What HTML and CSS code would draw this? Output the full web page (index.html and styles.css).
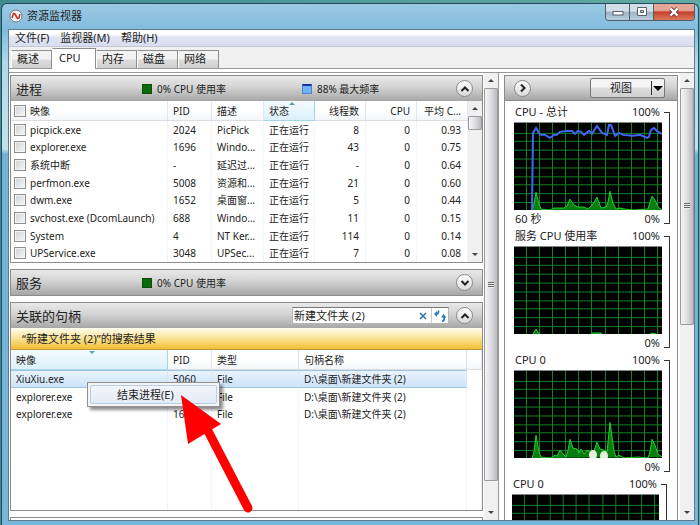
FILE: index.html
```html
<!DOCTYPE html>
<html lang="zh-CN">
<head>
  <meta charset="UTF-8">
  <meta name="viewport" content="width=device-width, initial-scale=1.0">
  <title>资源监视器</title>
  <link rel="stylesheet" href="styles.css">
</head>
<body>

<div class="window">
  <!-- 标题栏 -->
  <header class="titlebar">
    <svg class="app-icon" width="14" height="14" viewBox="0 0 14 14">
      <circle cx="7" cy="7" r="6" fill="#f4f4f4" stroke="#777" stroke-width="1"/>
      <path d="M3 9 L4.5 4.5 L6 5 L8.5 9.5 L10 9 L11 5" fill="none" stroke="#c8382e" stroke-width="1.6"/>
    </svg>
    <h1>资源监视器</h1>
    <div class="win-buttons">
      <button class="win-btn" aria-label="最小化">
        <svg width="12" height="10" viewBox="0 0 12 10"><rect x="1" y="4.5" width="10" height="3.5" fill="#fff" stroke="#56606c"/></svg>
      </button>
      <button class="win-btn" aria-label="最大化">
        <svg width="12" height="10" viewBox="0 0 12 10"><path d="M1.5 .5h9v8h-9z M4.5 3.5h3v2h-3z" fill="#fff" fill-rule="evenodd" stroke="#56606c"/></svg>
      </button>
      <button class="win-btn win-close" aria-label="关闭">
        <svg width="12" height="10" viewBox="0 0 12 10"><path d="M2.5 1.5 L9.5 8.5 M9.5 1.5 L2.5 8.5" stroke="#6b3a38" stroke-width="4"/><path d="M2.5 1.5 L9.5 8.5 M9.5 1.5 L2.5 8.5" stroke="#fff" stroke-width="2.4"/></svg>
      </button>
    </div>
  </header>

  <div class="client">
    <nav class="menubar">
      <button>文件(F)</button>
      <button>监视器(M)</button>
      <button>帮助(H)</button>
    </nav>

    <div class="tabs" role="tablist">
      <button class="tab" role="tab">概述</button>
      <button class="tab active" role="tab" aria-selected="true">CPU</button>
      <button class="tab" role="tab">内存</button>
      <button class="tab" role="tab">磁盘</button>
      <button class="tab" role="tab">网络</button>
    </div>

    <div class="content">
      <main class="panels">
        <!-- 进程 -->
        <section class="panel">
          <div class="panel-head">
            <h2>进程</h2>
            <span class="meter"><i class="swatch green"></i>0% CPU 使用率</span>
            <span class="meter"><i class="swatch blue"></i>88% 最大频率</span>
            <button class="round" aria-label="折叠"><svg width="10" height="8" viewBox="0 0 10 8"><path d="M1.5 6 L5 2.5 L8.5 6"/></svg></button>
          </div>
          <div class="table-wrap">
            <table class="processes">
              <colgroup>
                <col class="c-name"><col class="c-pid"><col class="c-desc"><col class="c-state"><col class="c-num"><col class="c-num"><col>
              </colgroup>
              <thead>
                <tr>
                  <th><label><input type="checkbox">映像</label></th>
                  <th>PID</th><th>描述</th><th class="sorted">状态</th>
                  <th class="num">线程数</th><th class="num">CPU</th><th class="num">平均 C...</th>
                </tr>
              </thead>
              <tbody>
                <tr><td><label><input type="checkbox">picpick.exe</label></td><td>2024</td><td>PicPick</td><td>正在运行</td><td class="num">8</td><td class="num">0</td><td class="num">0.93</td></tr>
                <tr><td><label><input type="checkbox">explorer.exe</label></td><td>1696</td><td>Windo...</td><td>正在运行</td><td class="num">43</td><td class="num">0</td><td class="num">0.75</td></tr>
                <tr><td><label><input type="checkbox">系统中断</label></td><td>-</td><td>延迟过...</td><td>正在运行</td><td class="num">-</td><td class="num">0</td><td class="num">0.64</td></tr>
                <tr><td><label><input type="checkbox">perfmon.exe</label></td><td>5008</td><td>资源和...</td><td>正在运行</td><td class="num">21</td><td class="num">0</td><td class="num">0.60</td></tr>
                <tr><td><label><input type="checkbox">dwm.exe</label></td><td>1652</td><td>桌面窗...</td><td>正在运行</td><td class="num">5</td><td class="num">0</td><td class="num">0.44</td></tr>
                <tr><td><label><input type="checkbox">svchost.exe (DcomLaunch)</label></td><td>688</td><td>Windo...</td><td>正在运行</td><td class="num">11</td><td class="num">0</td><td class="num">0.15</td></tr>
                <tr><td><label><input type="checkbox">System</label></td><td>4</td><td>NT Ker...</td><td>正在运行</td><td class="num">114</td><td class="num">0</td><td class="num">0.14</td></tr>
                <tr><td><label><input type="checkbox">UPService.exe</label></td><td>3048</td><td>UPSec...</td><td>正在运行</td><td class="num">7</td><td class="num">0</td><td class="num">0.08</td></tr>
              </tbody>
            </table>
            <div class="scrollbar">
              <button class="arrow up" aria-label="向上滚动"></button>
              <div class="thumb thumb-short"></div>
              <button class="arrow down" aria-label="向下滚动"></button>
            </div>
          </div>
        </section>

        <!-- 服务 -->
        <section class="panel">
          <div class="panel-head">
            <h2>服务</h2>
            <span class="meter"><i class="swatch green"></i>0% CPU 使用率</span>
            <button class="round" aria-label="展开"><svg width="10" height="8" viewBox="0 0 10 8"><path d="M1.5 2 L5 5.5 L8.5 2"/></svg></button>
          </div>
        </section>

        <!-- 关联的句柄 -->
        <section class="panel panel-fill">
          <div class="panel-head">
            <h2>关联的句柄</h2>
            <div class="search">
              <input type="text" value="新建文件夹 (2)" aria-label="搜索句柄">
              <button aria-label="清除"><svg width="8" height="8" viewBox="0 0 8 8"><path d="M1 1 L7 7 M7 1 L1 7" stroke="#2f6fae" stroke-width="1.5"/></svg></button>
              <button class="refresh" aria-label="刷新">
                <svg width="14" height="12" viewBox="0 0 14 12" fill="none" stroke="#2a7ac4" stroke-width="1.8"><path d="M5.500 .5 Q6 4 3 4"/><path d="M4 1 L1 4 L4 7 Z" fill="#2a7ac4" stroke="none"/><path d="M9 11.500 Q12 10.500 11 7"/><path d="M8 7.500 L10.500 4 L13.500 7.500 Z" fill="#2a7ac4" stroke="none"/></svg>
              </button>
            </div>
            <button class="round" aria-label="折叠"><svg width="10" height="8" viewBox="0 0 10 8"><path d="M1.5 6 L5 2.5 L8.5 6"/></svg></button>
          </div>
          <div class="result-bar">“新建文件夹 (2)”的搜索结果</div>
          <div class="handles-wrap">
            <table class="handles">
              <colgroup><col class="c-name"><col class="c-pid"><col class="c-type"><col><col class="c-rest"></colgroup>
              <thead>
                <tr><th class="sorted">映像</th><th>PID</th><th>类型</th><th>句柄名称</th><th></th></tr>
              </thead>
              <tbody>
                <tr class="selected"><td>XiuXiu.exe</td><td>5060</td><td>File</td><td>D:\桌面\新建文件夹 (2)</td><td></td></tr>
                <tr><td>explorer.exe</td><td>1696</td><td>File</td><td>D:\桌面\新建文件夹 (2)</td><td></td></tr>
                <tr><td>explorer.exe</td><td>1696</td><td>File</td><td>D:\桌面\新建文件夹 (2)</td><td></td></tr>
                <tr class="filler"><td></td><td></td><td></td><td></td><td></td></tr>
              </tbody>
            </table>
            <div class="context-menu"><button>结束进程(E)</button></div>
            <svg class="pointer" width="76" height="122" viewBox="0 0 76 122">
              <path d="M28 36 L68 113" stroke="#f00" stroke-width="9" stroke-linecap="round"/>
              <path d="M1 0 L41 29 L8 49 Z" fill="#f00"/>
            </svg>
          </div>
        </section>
        <div class="next-panel"></div>
      </main>

      <div class="scrollbar">
        <button class="arrow up" aria-label="向上滚动"></button>
        <div class="thumb thumb-main"><i class="grip"></i></div>
        <button class="arrow down" aria-label="向下滚动"></button>
      </div>

      <!-- 图表 -->
      <aside class="charts">
        <div class="chart-bar">
          <button class="round" aria-label="隐藏图表"><svg width="8" height="10" viewBox="0 0 8 10"><path d="M2 1.5 L5.5 5 L2 8.5"/></svg></button>
          <button class="view-btn"><span>视图</span><i></i></button>
        </div>
        <div class="chart-list">
          <figure class="chart">
            <figcaption><span>CPU - 总计</span><span>100%</span></figcaption>
            <svg class="graph" viewBox="0 0 148 88" preserveAspectRatio="none">
              <defs>
                <path id="grid" d="M12.5 0V88M25.5 0V88M38.5 0V88M51.5 0V88M64.5 0V88M77.5 0V88M91.5 0V88M104.5 0V88M117.5 0V88M130.5 0V88M143.5 0V88M0 10.5H148M0 18.5H148M0 27.5H148M0 36.5H148M0 45.5H148M0 54.5H148M0 62.5H148M0 71.5H148M0 80.5H148"/>
              </defs>
              <use href="#grid" class="grid"/>
              <path class="cpu" d="M18 88 L20 82 L22 70 L25 82 L27 87 L36 88 L40 86 L50 86 L53 84 L56 77 L60 83 L64 85 L70 85 L74 87 L79 82 L83 75 L87 86 L92 85 L94 80 L96 69 L99 81 L102 87 L106 86 L110 87 L120 88 L134 87 L136 80 L138 74 L141 78 L144 85 L148 88"/>
              <path class="freq" d="M18 88 L19 10 L22 5 L26 12 L31 12 L36 15 L40 12 L43 12 L46 9 L52 8 L58 8 L61 11 L64 8 L67 9 L70 12 L75 8 L78 11 L83 3 L88 10 L93 12 L95 2 L97 2 L101 13 L105 10 L109 12 L119 13 L126 12 L133 15 L135 14 L137 7 L140 5 L144 9 L148 11"/>
            </svg>
            <div class="chart-foot"><span>60 秒</span><span>0%</span></div>
          </figure>
          <figure class="chart">
            <figcaption><span>服务 CPU 使用率</span><span>100%</span></figcaption>
            <svg class="graph" viewBox="0 0 148 88" preserveAspectRatio="none">
              <use href="#grid" class="grid"/>
              <path class="cpu" d="M19 88 L22 83 L25 88 M77 88 L79 87 L87 87 L88 88 M136 88 L138 87 L142 88"/>
            </svg>
            <div class="chart-foot"><span></span><span>0%</span></div>
          </figure>
          <figure class="chart">
            <figcaption><span>CPU 0</span><span>100%</span></figcaption>
            <svg class="graph" viewBox="0 0 148 88" preserveAspectRatio="none">
              <use href="#grid" class="grid"/>
              <path class="cpu" d="M18 88 L20 82 L22 65 L25 82 L27 87 L37 88 L41 85 L43 86 L46 80 L50 85 L52 87 L54 80 L56 69 L59 78 L63 79 L65 83 L67 79 L70 84 L73 80 L79 84 L83 72 L86 79 L90 80 L93 82 L96 52 L100 81 L102 87 L105 85 L110 88 L124 87 L134 88 L136 82 L138 69 L141 75 L144 84 L148 87"/>
              <g fill="#e3f0dc"><ellipse cx="79" cy="85" rx="4" ry="5"/><ellipse cx="90" cy="86" rx="4" ry="5"/></g>
            </svg>
            <div class="chart-foot"><span></span><span>0%</span></div>
          </figure>
          <figure class="chart chart-last">
            <figcaption><span>CPU 0</span><span>100%</span></figcaption>
            <svg class="graph" viewBox="0 0 148 88" preserveAspectRatio="none">
              <use href="#grid" class="grid"/>
            </svg>
          </figure>
        </div>
      </aside>

      <div class="scrollbar">
        <button class="arrow up" aria-label="向上滚动"></button>
        <div class="thumb thumb-charts"><i class="grip"></i></div>
        <button class="arrow down" aria-label="向下滚动"></button>
      </div>
    </div>
  </div>
</div>

</body>
</html>
```
FILE: styles.css
```css
* {
  box-sizing: border-box;
}

body {
  margin: 0;
  height: 100vh;
  overflow: hidden;
  padding: 3px 1px 0;
  background: linear-gradient(90deg, #3e8d8f, #62aaa4);
  font-family: "Noto Sans", "Noto Sans CJK SC", sans-serif;
  font-size: 10px;
  line-height: 14px;
  color: #222;
}

h1, h2, figure {
  margin: 0;
  font-weight: normal;
}

button, input {
  font: inherit;
  color: inherit;
  border: 0;
  margin: 0;
  padding: 0;
  background: none;
}

/* 窗口边框 */
.window {
  height: 100%;
  display: flex;
  flex-direction: column;
  padding: 0 3px 4px 6px;
  border: 1px solid #24485c;
  border-bottom: 0;
  border-radius: 6px 6px 0 0;
  background: linear-gradient(180deg, #9cc9e2 0, #82bcde 26px, #b4d8ea 60px, #c2e0ee 145px, #72b2d8 150px, #7ab6da 100%);
}

.titlebar {
  display: flex;
  align-items: flex-start;
  height: 25px;
}

.app-icon {
  margin: 5px 4px 0 1px;
}

.titlebar h1 {
  flex: 1;
  font-size: 11px;
  line-height: 23px;
}

.win-buttons {
  display: flex;
  border: 1px solid #4c6070;
  border-top: 0;
  border-radius: 0 0 4px 4px;
  overflow: hidden;
}

.win-btn {
  width: 24px;
  height: 16px;
  display: flex;
  align-items: center;
  justify-content: center;
  border-right: 1px solid #4c6070;
  background: linear-gradient(#d3dfe8 45%, #9db3c4 50%, #b9cfdf);
}

.win-close {
  width: 40px;
  border-right: 0;
  background: linear-gradient(#e3a596 40%, #c8412a 50%, #d8775c);
}

.client {
  flex: 1;
  min-height: 0;
  display: flex;
  flex-direction: column;
  border: 1px solid #5f7c8e;
  background: #fff;
}

.menubar {
  display: flex;
  gap: 11px;
  height: 17px;
  padding-left: 6px;
  border-bottom: 1px solid #c3c6d6;
  background: linear-gradient(#fff 25%, #e0e3f2 45%, #d8def0);
  font-size: 11px;
}

/* 选项卡 */
.tabs {
  display: flex;
  align-items: flex-end;
  height: 22px;
  padding-left: 2px;
  border-bottom: 1px solid #999;
  background: #f0f0f0;
  font-size: 11px;
}

.tab {
  width: 41px;
  height: 18px;
  padding: 0 0 1px 5px;
  text-align: left;
  border: 1px solid #8e8e8e;
  border-left-color: #fff;
  border-bottom: 0;
  background: linear-gradient(#f2f2f2 45%, #dcdcdc 55%, #d0d0d0);
}

.tab.active {
  width: 44px;
  height: 21px;
  padding: 0 0 3px 6px;
  margin-bottom: -1px;
  background: #fff;
}

.content {
  flex: 1;
  min-height: 0;
  display: flex;
  margin-top: 3px;
  border-top: 1px solid #999;
}

.panels {
  flex: 1;
  min-width: 0;
  display: flex;
  flex-direction: column;
  gap: 6px;
  padding: 2px 1px 0;
}

.panel {
  border: 1px solid #8c8c8c;
}

.panel-fill {
  flex: 1;
  display: flex;
  flex-direction: column;
}

.panel-head {
  display: flex;
  align-items: center;
  height: 25px;
  padding: 0 9px 0 5px;
  background: linear-gradient(#e9e9e9, #d3d3d3 45%, #a6a6a6);
}

.panel-head h2 {
  flex: none;
  width: 126px;
  font-size: 13px;
}

.meter {
  display: flex;
  align-items: center;
  gap: 5px;
  min-width: 160px;
}

.meter + .meter {
  min-width: 0;
}

.swatch {
  width: 10px;
  height: 10px;
  border: 1px solid #0b4d0b;
  background: #0b6b0b;
}

.swatch.blue {
  border-color: #4a86c8;
  border-top: 2px solid #1c2f9c;
  background: #6db3f8;
}

.round {
  flex: none;
  display: flex;
  align-items: center;
  justify-content: center;
  width: 17px;
  height: 17px;
  margin-left: auto;
  border: 1px solid #888;
  border-radius: 50%;
  background: linear-gradient(#fff, #d9d9d9);
}

.round path {
  fill: none;
  stroke: #222;
  stroke-width: 2;
}

/* 表格 */
.table-wrap {
  display: flex;
}

table {
  border-collapse: separate;
  border-spacing: 0;
  table-layout: fixed;
  width: 100%;
}

.processes {
  height: 161px;
}

.c-name { width: 157px; }
.c-pid { width: 44px; }
.c-desc { width: 52px; }
.c-state { width: 51px; }
.c-num { width: 51px; }
.c-type { width: 87px; }
.c-rest { width: 15px; }

th, td {
  padding: 0 0 0 5px;
  text-align: left;
  font-weight: normal;
  white-space: nowrap;
  overflow: hidden;
  border-right: 1px solid #f0f5f9;
}

th {
  height: 20px;
  border-right-color: #dfe6ec;
  border-bottom: 1px solid #dadde2;
  background: linear-gradient(#fff 50%, #f3f5f7);
}

th.sorted {
  position: relative;
  border-right-color: #a5d6e6;
  border-bottom-color: #a5d6e6;
  background: linear-gradient(#f4fbfe, #dcf1fa);
}

th.sorted::before {
  content: "";
  position: absolute;
  top: 1px;
  left: 50%;
  border: 3px solid transparent;
  border-top: 0;
  border-bottom-color: #5b9db5;
}

.handles th.sorted::before {
  border: 3px solid transparent;
  border-bottom: 0;
  border-top-color: #5b9db5;
}

.num {
  padding: 0 6px 0 0;
  text-align: right;
}

th label, td label {
  display: flex;
  align-items: center;
  gap: 4px;
  margin-left: -2px;
}

input[type="checkbox"] {
  appearance: none;
  width: 12px;
  height: 12px;
  border: 1px solid #8e8f8f;
  background: linear-gradient(135deg, #cfd3d6, #f6f6f6);
  box-shadow: inset 0 0 0 1px #f4f4f4;
}

/* 滚动条 */
.scrollbar {
  flex: none;
  display: flex;
  flex-direction: column;
  width: 14px;
  background: #f0f0f0;
}

.arrow {
  height: 15px;
  display: flex;
  align-items: center;
  justify-content: center;
}

.arrow::before {
  content: "";
  border: 3px solid transparent;
  border-top: 0;
  border-bottom-color: #444;
}

.arrow.down {
  margin-top: auto;
}

.arrow.down::before {
  border: 3px solid transparent;
  border-bottom: 0;
  border-top-color: #444;
}

.thumb {
  display: flex;
  align-items: center;
  justify-content: center;
  border: 1px solid #9a9a9a;
  border-radius: 1px;
  background: linear-gradient(90deg, #f5f5f5, #e2e2e4 45%, #b9b9c0);
}

.thumb-short { height: 14px; }
.thumb-main { height: 88%; }
.thumb-charts { height: 53%; }

.grip {
  width: 6px;
  height: 6px;
  background: repeating-linear-gradient(#666 0 1px, #eee 1px 2px);
}

/* 搜索 */
.search {
  display: flex;
  width: 157px;
  height: 17px;
  margin-left: auto;
  border: 1px solid #b5b5b5;
  border-top-color: #777;
  background: #fff;
}

.search + .round {
  margin-left: 7px;
}

.search input {
  flex: 1;
  min-width: 0;
  padding-left: 1px;
  font-size: 11px;
}

.search button {
  display: flex;
  align-items: center;
  justify-content: center;
  width: 17px;
}

.search .refresh {
  border-left: 1px solid #ccc;
}

.result-bar {
  height: 22px;
  padding-left: 11px;
  line-height: 21px;
  border-bottom: 1px solid #b9953c;
  background: linear-gradient(#fffdf0, #fbe49b 45%, #f3bf33);
  font-size: 11px;
}

.handles-wrap {
  flex: 1;
  display: flex;
  position: relative;
}

.handles td {
  height: 17px;
}

.handles .filler td {
  height: auto;
}

.handles .selected td {
  height: 18px;
  border-top: 1px solid #9fc4e3;
  border-bottom: 1px solid #9fc4e3;
  border-right-color: #d6e7f8;
  background: linear-gradient(#e9f3fd, #cde3f8);
}

.handles .selected td:last-child {
  border-color: transparent;
  background: none;
}

/* 右键菜单 */
.context-menu {
  position: absolute;
  left: 76px;
  top: 32px;
  width: 133px;
  padding: 2px;
  border: 1px solid #8f8f8f;
  background: #f5f5f5;
  box-shadow: 3px 3px 3px rgba(0, 0, 0, 0.45);
}

.context-menu button {
  width: 100%;
  height: 19px;
  padding-left: 26px;
  text-align: left;
  border: 1px solid #b5cfe8;
  border-radius: 2px;
  background: linear-gradient(#f3f6fb, #e2ebf6);
  font-size: 11px;
}

.pointer {
  position: absolute;
  left: 169px;
  top: 45px;
}

.next-panel {
  height: 3px;
  border: 1px solid #8c8c8c;
  border-bottom: 0;
}

/* 图表栏 */
.charts {
  flex: none;
  display: flex;
  flex-direction: column;
  width: 182px;
  padding: 2px 2px 0 5px;
  border-left: 1px solid #999;
}

.chart-bar {
  display: flex;
  align-items: center;
  justify-content: space-between;
  height: 26px;
  padding: 0 12px 0 9px;
  border: 1px solid #8c8c8c;
  background: linear-gradient(#e9e9e9, #d3d3d3 45%, #a6a6a6);
}

.chart-bar .round {
  margin-left: 0;
}

.view-btn {
  display: flex;
  align-items: center;
  width: 75px;
  height: 20px;
  border: 1px solid #777;
  border-radius: 2px;
  background: linear-gradient(#f4f4f4 45%, #dedede 50%, #d0d0d0);
  font-size: 11px;
}

.view-btn span {
  flex: 1;
  border-right: 1px solid #333;
}

.view-btn i {
  margin: 0 1px;
  border: 5px solid transparent;
  border-top-color: #000;
  border-bottom: 0;
}

.chart-list {
  flex: 1;
  min-height: 0;
  overflow: hidden;
  padding-top: 1px;
  border: 1px solid #8c8c8c;
  border-top: 0;
  border-bottom: 0;
  font-size: 11px;
}

.chart {
  position: relative;
  padding: 0 15px 0 9px;
}

.chart-last {
  padding: 0 18px 0 7px;
}

.chart figcaption, .chart-foot {
  display: flex;
  justify-content: space-between;
  height: 20px;
  line-height: 20px;
  padding: 0 2px 0 1px;
}

.chart-foot {
  height: 16px;
  line-height: 17px;
}

/* 右侧括线 */
.chart::after {
  content: "";
  position: absolute;
  top: 10px;
  right: 7px;
  bottom: 2px;
  width: 5px;
  border: 1px solid #333;
  border-left: 0;
}

.chart-last::after {
  right: 10px;
}

.graph {
  display: block;
  width: 100%;
  height: 88px;
  border-top: 1px solid #888;
  background: #000;
}

.grid {
  fill: none;
  stroke: #0d8426;
  stroke-width: 1;
}

.cpu {
  fill: #0a7d12;
  stroke: #1fd22b;
  stroke-width: 1;
}

.freq {
  fill: none;
  stroke: #4166f5;
  stroke-width: 2;
}
```
